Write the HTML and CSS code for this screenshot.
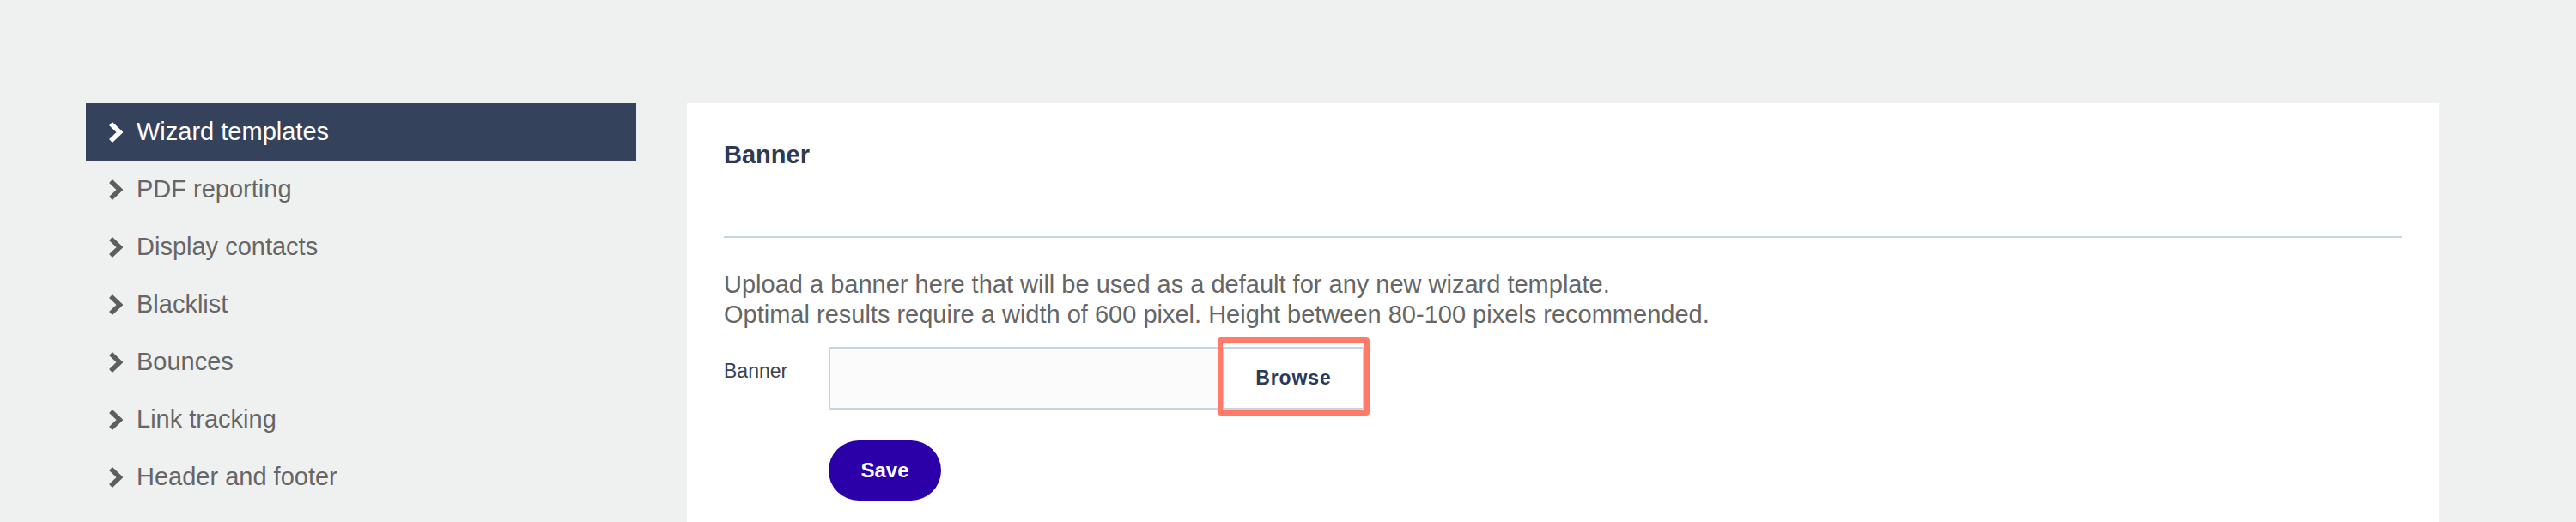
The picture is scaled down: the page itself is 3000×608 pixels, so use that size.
FILE: index.html
```html
<!DOCTYPE html>
<html lang="en">
<head>
<meta charset="utf-8">
<title>Settings - Banner</title>
<link rel="stylesheet" href="styles.css">
</head>
<body>
<div class="page">
  <nav class="sidebar">
    <a class="nav-item active" href="#"><svg class="chev" viewBox="0 0 17 26"><polyline points="3,3 13.5,13 3,23"/></svg><span>Wizard templates</span></a>
    <a class="nav-item" href="#"><svg class="chev" viewBox="0 0 17 26"><polyline points="3,3 13.5,13 3,23"/></svg><span>PDF reporting</span></a>
    <a class="nav-item" href="#"><svg class="chev" viewBox="0 0 17 26"><polyline points="3,3 13.5,13 3,23"/></svg><span>Display contacts</span></a>
    <a class="nav-item" href="#"><svg class="chev" viewBox="0 0 17 26"><polyline points="3,3 13.5,13 3,23"/></svg><span>Blacklist</span></a>
    <a class="nav-item" href="#"><svg class="chev" viewBox="0 0 17 26"><polyline points="3,3 13.5,13 3,23"/></svg><span>Bounces</span></a>
    <a class="nav-item" href="#"><svg class="chev" viewBox="0 0 17 26"><polyline points="3,3 13.5,13 3,23"/></svg><span>Link tracking</span></a>
    <a class="nav-item" href="#"><svg class="chev" viewBox="0 0 17 26"><polyline points="3,3 13.5,13 3,23"/></svg><span>Header and footer</span></a>
  </nav>
  <main class="panel">
    <h2 class="panel-title">Banner</h2>
    <p class="intro">Upload a banner here that will be used as a default for any new wizard template.<br>Optimal results require a width of 600 pixel. Height between 80-100 pixels recommended.</p>
    <div class="form-row">
      <label class="field-label">Banner</label>
      <div class="file-input"></div>
      <div class="browse-wrap">
        <button class="browse" type="button">Browse</button>
        <span class="highlight"></span>
      </div>
    </div>
    <button class="save" type="button">Save</button>
  </main>
</div>
</body>
</html>
```

FILE: styles.css
```css
* { box-sizing: border-box; }

html, body {
  margin: 0;
  padding: 0;
  background: #eff1f0;
  font-family: "Liberation Sans", Arial, sans-serif;
  overflow: hidden;
}

.page {
  display: flex;
  align-items: flex-start;
  gap: 59px;
  padding: 120px 0 0 100px;
}

.sidebar {
  width: 641px;
  display: flex;
  flex-direction: column;
}

.nav-item {
  display: flex;
  align-items: center;
  gap: 16px;
  height: 67px;
  padding-left: 26px;
  font-size: 29px;
  line-height: 67px;
  color: #666666;
  text-decoration: none;
}

.nav-item .chev {
  width: 17px;
  height: 26px;
  flex: none;
}

.nav-item .chev polyline {
  fill: none;
  stroke: #5e5e5e;
  stroke-width: 5.5;
  stroke-linecap: butt;
  stroke-linejoin: miter;
}

.nav-item.active {
  background: #35425c;
  color: #ffffff;
}

.nav-item.active .chev polyline {
  stroke: #ffffff;
}

.panel {
  width: 2040px;
  height: 488px;
  background: #ffffff;
  padding: 43px 43px;
}

.panel-title {
  margin: 0;
  font-size: 29px;
  line-height: 34px;
  font-weight: bold;
  color: #2f3a52;
  padding-bottom: 78px;
  border-bottom: 2px solid #c9d4e0;
}

.intro {
  margin: 37px 0 0;
  font-size: 29px;
  line-height: 35px;
  color: #666666;
}

.form-row {
  display: flex;
  margin-top: 20px;
}

.field-label {
  width: 122px;
  padding-top: 15px;
  font-size: 23px;
  line-height: 26px;
  color: #3c4252;
}

.file-input {
  width: 459px;
  height: 73px;
  border: 2px solid #c9d3df;
  border-right: none;
  border-radius: 3px 0 0 3px;
  background: #fbfbfc;
}

.browse-wrap {
  position: relative;
}

.browse {
  display: block;
  width: 165px;
  height: 73px;
  border: 2px solid #c9d3df;
  border-radius: 0 3px 3px 0;
  background: #ffffff;
  font-family: "Liberation Sans", Arial, sans-serif;
  font-size: 23px;
  font-weight: bold;
  letter-spacing: 0.9px;
  color: #2e3a55;
  padding: 0;
}

.highlight {
  position: absolute;
  left: -6px;
  right: -6px;
  top: -11px;
  bottom: -7px;
  border: 6.5px solid #ff7b67;
  border-radius: 4px;
  pointer-events: none;
}

.save {
  display: block;
  margin: 36px 0 0 122px;
  width: 131px;
  height: 70px;
  border: none;
  border-radius: 35px;
  background: #2c00a8;
  color: #ffffff;
  font-family: "Liberation Sans", Arial, sans-serif;
  font-size: 24px;
  font-weight: bold;
}
```
